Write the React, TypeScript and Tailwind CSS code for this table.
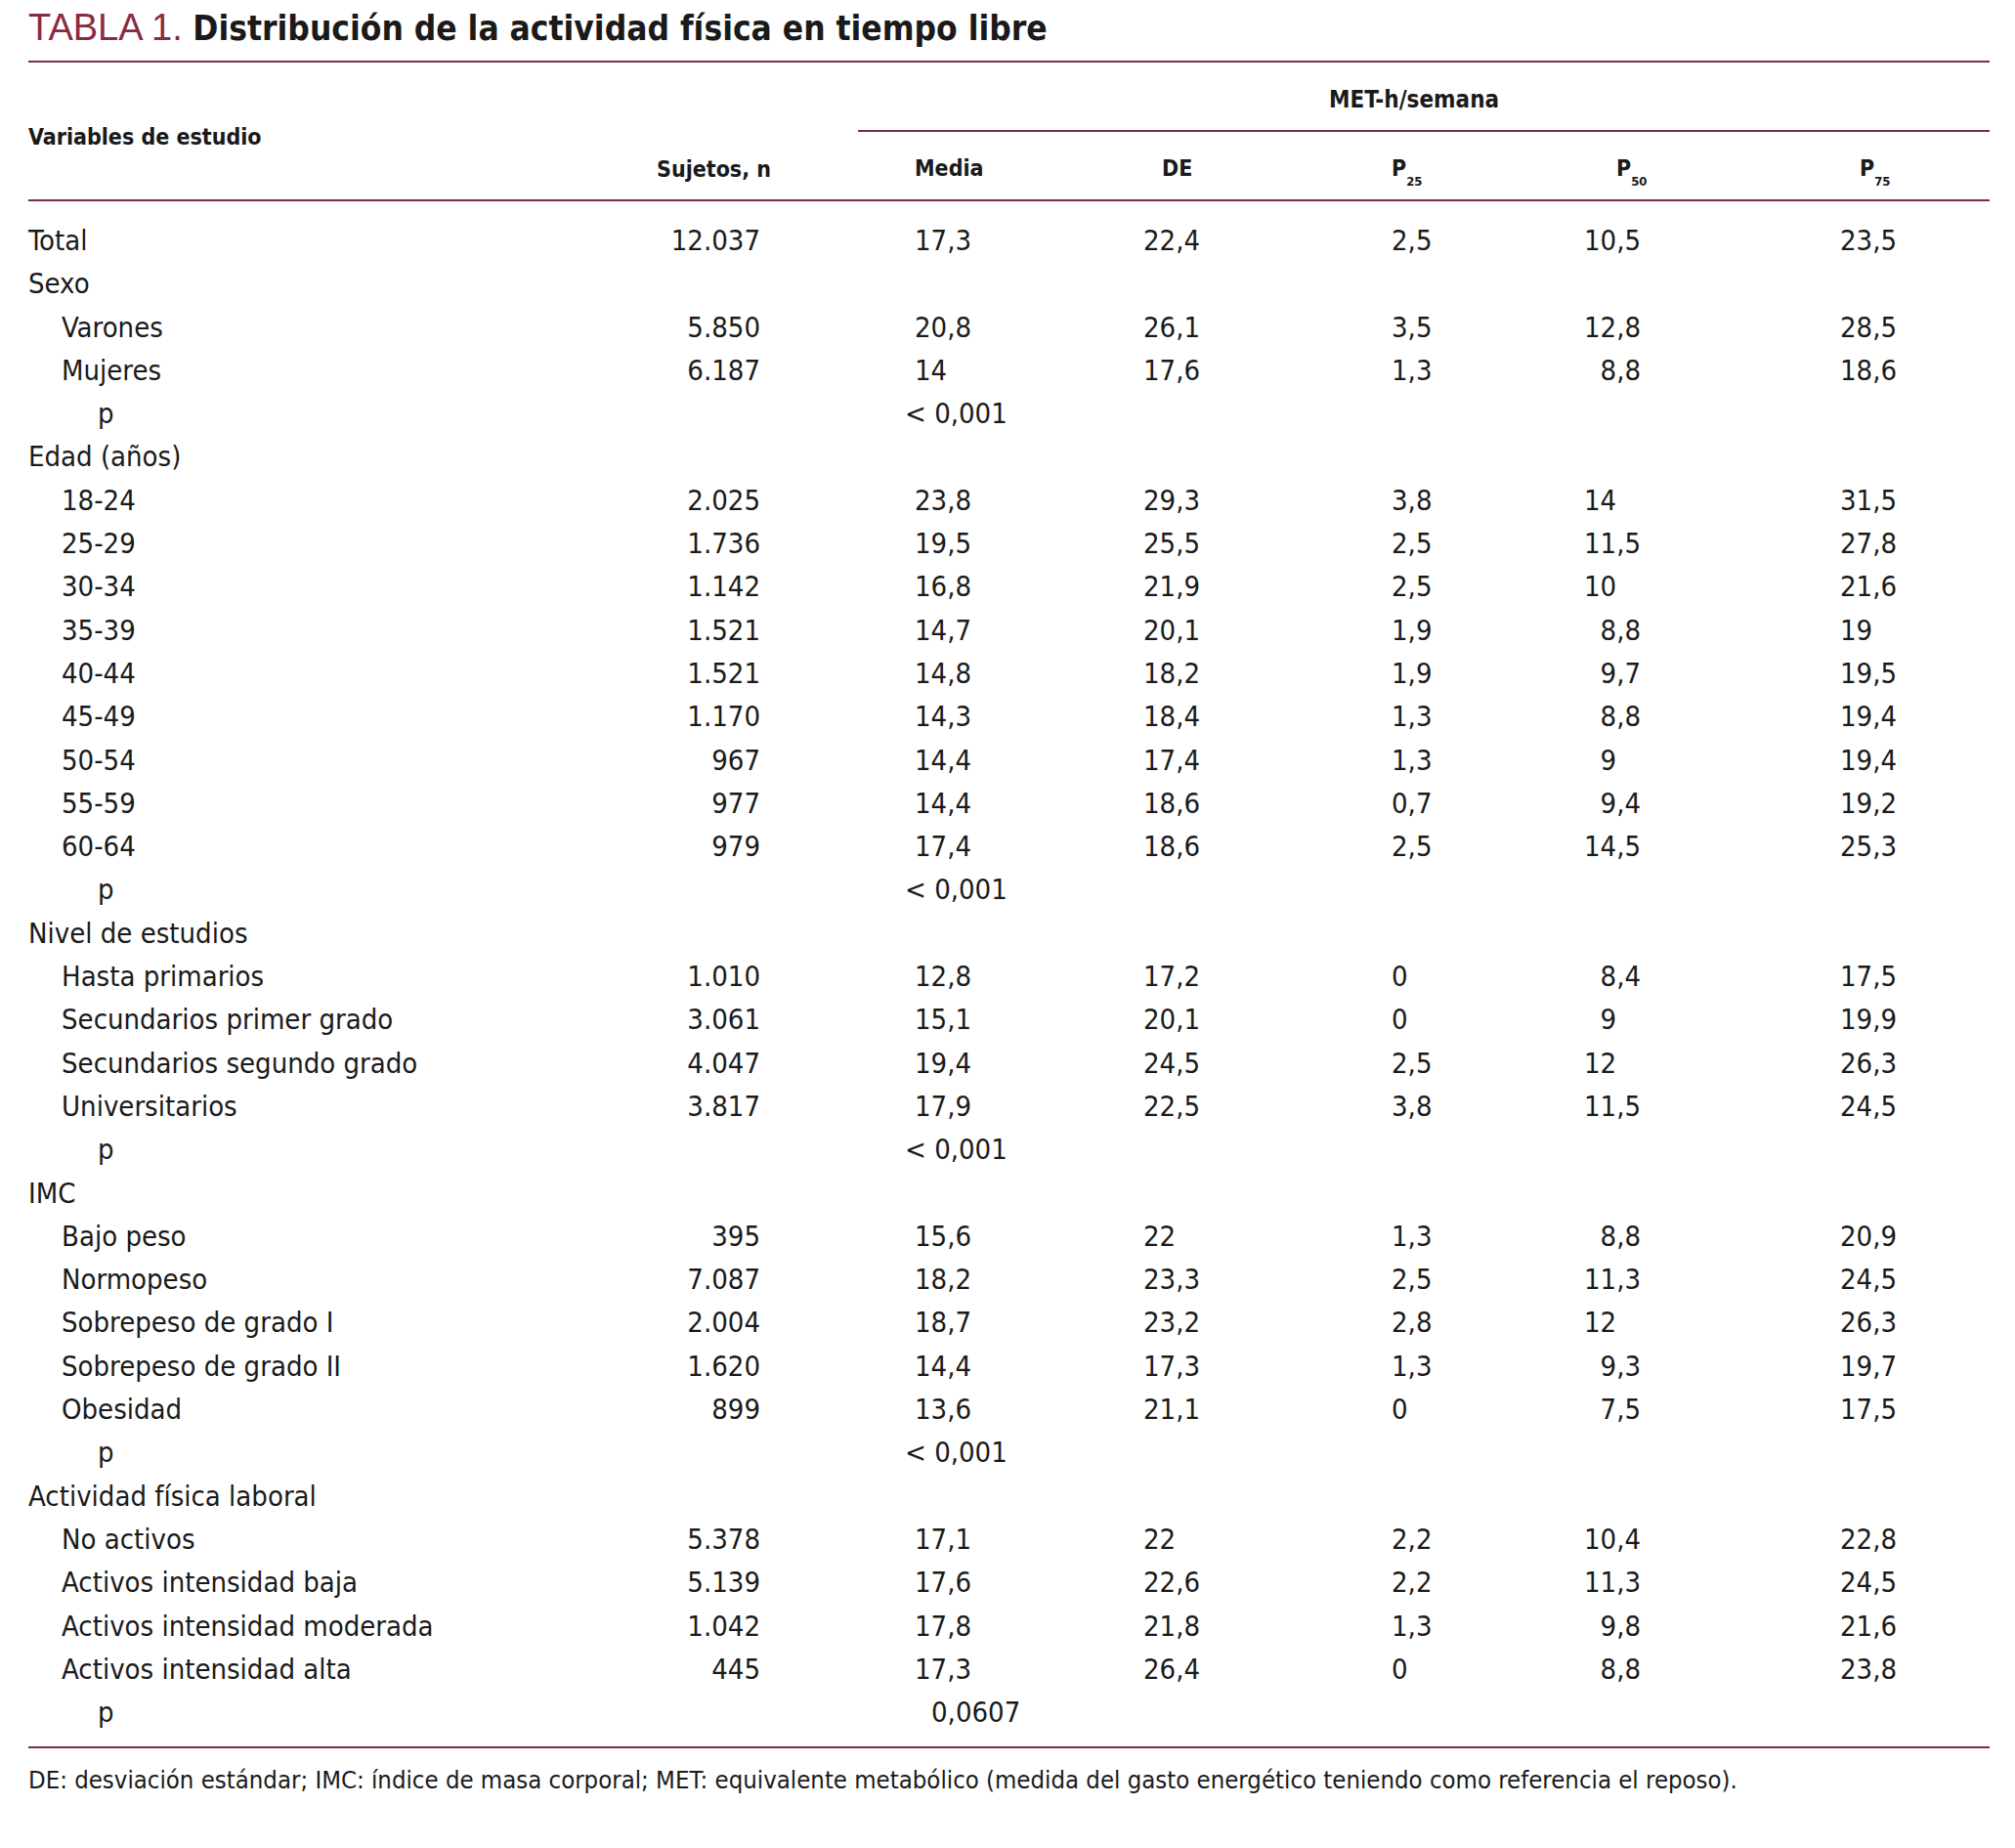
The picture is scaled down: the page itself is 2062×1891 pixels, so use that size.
const cond = "font-['DejaVu_Sans_Condensed','Arial_Narrow',sans-serif]";

type Row = {
  label: string;
  level: 0 | 1 | 2;
  n?: string;
  media?: string;
  de?: string;
  p25?: string;
  p50?: string;
  p75?: string;
};

const rows: Row[] = [
  { label: "Total", level: 0, n: "12.037", media: "17,3", de: "22,4", p25: "2,5", p50: "10,5", p75: "23,5" },
  { label: "Sexo", level: 0 },
  { label: "Varones", level: 1, n: "5.850", media: "20,8", de: "26,1", p25: "3,5", p50: "12,8", p75: "28,5" },
  { label: "Mujeres", level: 1, n: "6.187", media: "14", de: "17,6", p25: "1,3", p50: "8,8", p75: "18,6" },
  { label: "p", level: 2, media: "< 0,001" },
  { label: "Edad (años)", level: 0 },
  { label: "18-24", level: 1, n: "2.025", media: "23,8", de: "29,3", p25: "3,8", p50: "14", p75: "31,5" },
  { label: "25-29", level: 1, n: "1.736", media: "19,5", de: "25,5", p25: "2,5", p50: "11,5", p75: "27,8" },
  { label: "30-34", level: 1, n: "1.142", media: "16,8", de: "21,9", p25: "2,5", p50: "10", p75: "21,6" },
  { label: "35-39", level: 1, n: "1.521", media: "14,7", de: "20,1", p25: "1,9", p50: "8,8", p75: "19" },
  { label: "40-44", level: 1, n: "1.521", media: "14,8", de: "18,2", p25: "1,9", p50: "9,7", p75: "19,5" },
  { label: "45-49", level: 1, n: "1.170", media: "14,3", de: "18,4", p25: "1,3", p50: "8,8", p75: "19,4" },
  { label: "50-54", level: 1, n: "967", media: "14,4", de: "17,4", p25: "1,3", p50: "9", p75: "19,4" },
  { label: "55-59", level: 1, n: "977", media: "14,4", de: "18,6", p25: "0,7", p50: "9,4", p75: "19,2" },
  { label: "60-64", level: 1, n: "979", media: "17,4", de: "18,6", p25: "2,5", p50: "14,5", p75: "25,3" },
  { label: "p", level: 2, media: "< 0,001" },
  { label: "Nivel de estudios", level: 0 },
  { label: "Hasta primarios", level: 1, n: "1.010", media: "12,8", de: "17,2", p25: "0", p50: "8,4", p75: "17,5" },
  { label: "Secundarios primer grado", level: 1, n: "3.061", media: "15,1", de: "20,1", p25: "0", p50: "9", p75: "19,9" },
  { label: "Secundarios segundo grado", level: 1, n: "4.047", media: "19,4", de: "24,5", p25: "2,5", p50: "12", p75: "26,3" },
  { label: "Universitarios", level: 1, n: "3.817", media: "17,9", de: "22,5", p25: "3,8", p50: "11,5", p75: "24,5" },
  { label: "p", level: 2, media: "< 0,001" },
  { label: "IMC", level: 0 },
  { label: "Bajo peso", level: 1, n: "395", media: "15,6", de: "22", p25: "1,3", p50: "8,8", p75: "20,9" },
  { label: "Normopeso", level: 1, n: "7.087", media: "18,2", de: "23,3", p25: "2,5", p50: "11,3", p75: "24,5" },
  { label: "Sobrepeso de grado I", level: 1, n: "2.004", media: "18,7", de: "23,2", p25: "2,8", p50: "12", p75: "26,3" },
  { label: "Sobrepeso de grado II", level: 1, n: "1.620", media: "14,4", de: "17,3", p25: "1,3", p50: "9,3", p75: "19,7" },
  { label: "Obesidad", level: 1, n: "899", media: "13,6", de: "21,1", p25: "0", p50: "7,5", p75: "17,5" },
  { label: "p", level: 2, media: "< 0,001" },
  { label: "Actividad física laboral", level: 0 },
  { label: "No activos", level: 1, n: "5.378", media: "17,1", de: "22", p25: "2,2", p50: "10,4", p75: "22,8" },
  { label: "Activos intensidad baja", level: 1, n: "5.139", media: "17,6", de: "22,6", p25: "2,2", p50: "11,3", p75: "24,5" },
  { label: "Activos intensidad moderada", level: 1, n: "1.042", media: "17,8", de: "21,8", p25: "1,3", p50: "9,8", p75: "21,6" },
  { label: "Activos intensidad alta", level: 1, n: "445", media: "17,3", de: "26,4", p25: "0", p50: "8,8", p75: "23,8" },
  { label: "p", level: 2, media: "0,0607" },
];

// one-digit values in the P50 column sit one figure to the right
const padFigure = (v?: string) => (v && !/^\d\d/.test(v) ? "\u2007" + v : v);

function Pct({ sub }: { sub: string }) {
  return (
    <span>
      P<sub className="text-[13px] align-[-6px]">{sub}</sub>
    </span>
  );
}

function Rule() {
  return <div className="h-[2px] bg-[#7b2e40]" />;
}

export default function App() {
  const grid = "grid grid-cols-[500px_260px_381px_254px_197px_262px_153px]";

  return (
    <div className={`w-[2062px] min-h-[1891px] bg-white text-[#1a1a1a] pl-[29px] pr-[26px] ${cond}`}>
      <h1 className="h-[62px] pt-[6px] leading-[44px]">
        <span className="font-['Liberation_Sans',Arial,sans-serif] text-[38px] text-[#8b2a3f]">TABLA 1. </span>
        <span className="font-bold text-[35px]">Distribución de la actividad física en tiempo libre</span>
      </h1>
      <Rule />

      {/* header */}
      <div className="flex text-[23px] font-bold">
        <div className="w-[500px] flex items-center pt-[12px]">Variables de estudio</div>
        <div className="w-[260px] flex items-end justify-end pb-[14px]">Sujetos, n</div>
        <div className="flex-1 flex flex-col">
          <div className="h-[69px] ml-[89px] pr-[20px] pt-[6px] flex items-center justify-center text-[24px]">MET-h/semana</div>
          <div className="ml-[89px] h-[2px] bg-[#7b2e40]" />
          <div className="h-[69px] pt-[6px] grid grid-cols-[381px_254px_197px_262px_153px] items-center">
            <div className="pl-[147px]">Media</div>
            <div className="pl-[19px]">DE</div>
            <div><Pct sub="25" /></div>
            <div className="pl-[33px]"><Pct sub="50" /></div>
            <div className="pl-[20px]"><Pct sub="75" /></div>
          </div>
        </div>
      </div>
      <Rule />

      {/* body */}
      <div className="pt-[18px] pb-[13px] text-[29px] leading-[44.3px]">
        {rows.map((r, i) => (
          <div key={i} className={grid}>
            <div className={r.level === 0 ? "" : r.level === 1 ? "pl-[34px]" : "pl-[71px]"}>{r.label}</div>
            <div className="text-right pr-[11px]">{r.n}</div>
            <div className={r.media === "0,0607" ? "pl-[164px]" : r.media?.startsWith("<") ? "pl-[137px]" : "pl-[147px]"}>
              {r.media}
            </div>
            <div>{r.de}</div>
            <div>{r.p25}</div>
            <div className="whitespace-pre">{padFigure(r.p50)}</div>
            <div>{r.p75}</div>
          </div>
        ))}
      </div>
      <Rule />

      <p className="pt-[15px] text-[25.5px] leading-[34px]">
        DE: desviación estándar; IMC: índice de masa corporal; MET: equivalente metabólico (medida del gasto energético teniendo como referencia el reposo).
      </p>
    </div>
  );
}
